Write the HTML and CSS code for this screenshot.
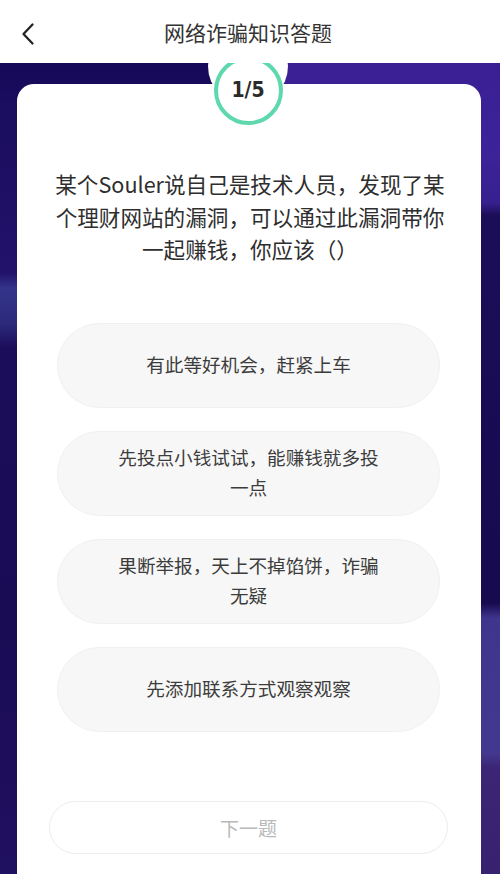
FILE: index.html
```html
<!DOCTYPE html>
<html>
<head>
    <meta charset="utf-8" />
    <title>网络诈骗知识答题</title>
    <link rel="stylesheet" href="styles.css">
</head>
<body>
    <div class="header">
        <a class="back" href="#">
            <svg width="16" height="24" viewBox="0 0 16 24">
                <path d="M12.5 2.5 L3.5 12 L12.5 21.5" fill="none" stroke="#222" stroke-width="2.3" stroke-linecap="round" stroke-linejoin="round" />
            </svg>
        </a>
        <div class="header-title">网络诈骗知识答题</div>
    </div>

    <div class="stage">
        <div class="card">
            <div class="badge">
                <div class="badge-ring">1/5</div>
            </div>

            <div class="question">某个Souler说自己是技术人员，发现了某个理财网站的漏洞，可以通过此漏洞带你一起赚钱，你应该（）</div>

            <div class="options">
                <div class="option"><span>有此等好机会，赶紧上车</span></div>
                <div class="option"><span>先投点小钱试试，能赚钱就多投一点</span></div>
                <div class="option"><span>果断举报，天上不掉馅饼，诈骗无疑</span></div>
                <div class="option"><span>先添加联系方式观察观察</span></div>
            </div>

            <div class="next-btn">下一题</div>
        </div>
    </div>
</body>
</html>
```

FILE: styles.css
```css
* {
    padding: 0;
    margin: 0;
    box-sizing: border-box;
}

html,
body {
    height: 100%;
    overflow: hidden;
}

body {
    font-family: "Noto Sans CJK SC", "Noto Sans", sans-serif;
    color: #333;
    background: #fff;
}

.header {
    position: relative;
    z-index: 2;
    height: 63px;
    background: #fff;
    display: flex;
    align-items: center;
    justify-content: center;
}

.back {
    position: absolute;
    left: 20px;
    top: 22px;
    display: block;
    width: 16px;
    height: 24px;
}

.header-title {
    font-size: 21px;
    color: #333;
    margin-left: -4px;
}

.stage {
    height: 811px;
    padding: 21px 19px 0 17px;
    background:
        linear-gradient(180deg, #150958 0px, #1a0c5e 40px, #1f1066 140px, #22126a 210px, #33348a 225px, #2c2a7c 260px, #1c0d5a 285px, #1a0b55 560px, #201060 811px) left top / 50% 100% no-repeat,
        linear-gradient(180deg, #3a1f94 0px, #3c2399 90px, #36208e 140px, #1c0d58 152px, #170a4f 540px, #3f358c 555px, #43388f 690px, #3b2574 705px, #382270 811px) right top / 50% 100% no-repeat;
}

.card {
    position: relative;
    background: #fff;
    border-radius: 17px;
    min-height: 820px;
    padding: 86px 0 0;
}

.badge {
    position: absolute;
    left: 50%;
    top: -58px;
    width: 80px;
    height: 80px;
    margin-left: -41px;
    border-radius: 50%;
    background: #fff;
    display: flex;
    align-items: center;
    justify-content: center;
}

.badge-ring {
    width: 69px;
    height: 69px;
    margin-top: 48px;
    border-radius: 50%;
    border: 4px solid #5ed8ad;
    display: flex;
    align-items: center;
    justify-content: center;
    font-family: "DejaVu Sans", sans-serif;
    font-stretch: condensed;
    font-weight: bold;
    font-size: 21px;
    color: #2a2a2a;
    background: #fff;
}

.question {
    padding: 0 34px 0 36px;
    font-size: 21.6px;
    line-height: 32.5px;
    color: #2e2e2e;
    text-align: center;
    margin-top: -2px;
}

.options {
    margin: 57px 41px 0 40px;
    display: flex;
    flex-direction: column;
    gap: 23px;
}

.option {
    height: 85px;
    border-radius: 43px;
    background: #f7f7f7;
    border: 1px solid #f0f0f0;
    display: flex;
    align-items: center;
    justify-content: center;
    padding: 0 56px;
    text-align: center;
}

.option span {
    font-size: 18.6px;
    line-height: 30px;
    color: #3c3c3c;
    margin-top: -3px;
}

.next-btn {
    margin: 69px 33px 0 32px;
    height: 53px;
    border: 1px solid #ececec;
    border-radius: 27px;
    display: flex;
    align-items: center;
    justify-content: center;
    font-size: 19px;
    color: #b9b9b9;
}
```
